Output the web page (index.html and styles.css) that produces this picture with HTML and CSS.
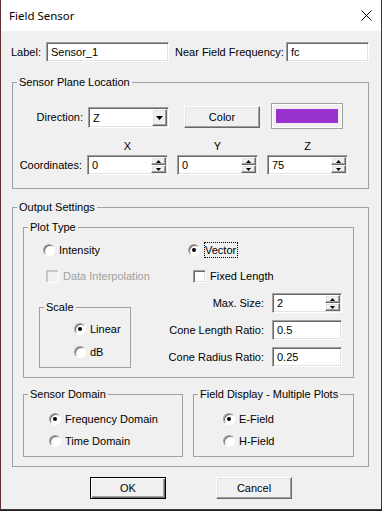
FILE: index.html
```html
<!DOCTYPE html>
<html lang="en">
<head>
  <meta charset="UTF-8">
  <meta name="viewport" content="width=device-width, initial-scale=1.0">
  <link rel="stylesheet" href="styles.css">
</head>
<body>
  <div class="window">
    <div class="titlebar">
      <span class="title">Field Sensor</span>
      <svg class="close" width="11" height="11" viewBox="0 0 11 11">
        <path d="M0.5 0.5 L10.5 10.5 M10.5 0.5 L0.5 10.5" stroke="#000" stroke-width="1" fill="none"/>
      </svg>
    </div>

    <div class="row-top">
      <span class="lbl lbl-label">Label:</span>
      <div class="field w-label"><span class="val">Sensor_1</span></div>
      <span class="lbl lbl-freq">Near Field Frequency:</span>
      <div class="field w-freq"><span class="val">fc</span></div>
    </div>

    <!-- Sensor Plane Location -->
    <div class="group g-plane">
      <div class="legend">Sensor Plane Location</div>
      <div class="dir-row">
        <span class="lbl dir-lbl">Direction:</span>
        <div class="field combo">
          <span class="val">Z</span>
          <span class="btn drop">
            <svg width="7" height="4" viewBox="0 0 7 4"><polygon points="0,0 7,0 3.5,4" fill="#000"/></svg>
          </span>
        </div>
        <div class="btn color-btn">Color</div>
        <div class="swatch"><div class="swatch-fill"></div></div>
      </div>
      <div class="coord-grid">
        <span></span>
        <span class="axis">X</span>
        <span class="axis">Y</span>
        <span class="axis">Z</span>
        <span class="lbl coord-lbl">Coordinates:</span>
        <div class="field spin">
          <span class="val">0</span>
          <span class="arrows">
            <span class="btn arr"><svg width="5" height="3" viewBox="0 0 5 3"><polygon points="0,3 5,3 2.5,0" fill="#000"/></svg></span>
            <span class="btn arr"><svg width="5" height="3" viewBox="0 0 5 3"><polygon points="0,0 5,0 2.5,3" fill="#000"/></svg></span>
          </span>
        </div>
        <div class="field spin">
          <span class="val">0</span>
          <span class="arrows">
            <span class="btn arr"><svg width="5" height="3" viewBox="0 0 5 3"><polygon points="0,3 5,3 2.5,0" fill="#000"/></svg></span>
            <span class="btn arr"><svg width="5" height="3" viewBox="0 0 5 3"><polygon points="0,0 5,0 2.5,3" fill="#000"/></svg></span>
          </span>
        </div>
        <div class="field spin">
          <span class="val">75</span>
          <span class="arrows">
            <span class="btn arr"><svg width="5" height="3" viewBox="0 0 5 3"><polygon points="0,3 5,3 2.5,0" fill="#000"/></svg></span>
            <span class="btn arr"><svg width="5" height="3" viewBox="0 0 5 3"><polygon points="0,0 5,0 2.5,3" fill="#000"/></svg></span>
          </span>
        </div>
      </div>
    </div>

    <!-- Output Settings -->
    <div class="group g-output">
      <div class="legend">Output Settings</div>

      <div class="group g-plot">
        <div class="legend">Plot Type</div>
        <div class="opt-row">
          <label class="opt opt-intensity"><span class="radio"></span>Intensity</label>
          <label class="opt"><span class="radio on"></span><span class="focus">Vector</span></label>
        </div>
        <div class="opt-row chk-row">
          <label class="opt opt-interp disabled"><span class="check"></span>Data Interpolation</label>
          <label class="opt"><span class="check"></span>Fixed Length</label>
        </div>
        <div class="lower">
          <div class="group g-scale">
            <div class="legend">Scale</div>
            <label class="opt scale-opt first"><span class="radio on"></span>Linear</label>
            <label class="opt scale-opt"><span class="radio"></span>dB</label>
          </div>
          <div class="params">
            <span class="lbl">Max. Size:</span>
            <div class="field spin">
              <span class="val">2</span>
              <span class="arrows">
                <span class="btn arr"><svg width="5" height="3" viewBox="0 0 5 3"><polygon points="0,3 5,3 2.5,0" fill="#000"/></svg></span>
                <span class="btn arr"><svg width="5" height="3" viewBox="0 0 5 3"><polygon points="0,0 5,0 2.5,3" fill="#000"/></svg></span>
              </span>
            </div>
            <span class="lbl">Cone Length Ratio:</span>
            <div class="field"><span class="val">0.5</span></div>
            <span class="lbl">Cone Radius Ratio:</span>
            <div class="field"><span class="val">0.25</span></div>
          </div>
        </div>
      </div>

      <div class="domain-row">
        <div class="group g-domain">
          <div class="legend">Sensor Domain</div>
          <label class="opt dom-opt first"><span class="radio on"></span>Frequency Domain</label>
          <label class="opt dom-opt"><span class="radio"></span>Time Domain</label>
        </div>
        <div class="group g-display">
          <div class="legend">Field Display - Multiple Plots</div>
          <label class="opt disp-opt first"><span class="radio on"></span>E-Field</label>
          <label class="opt disp-opt"><span class="radio"></span>H-Field</label>
        </div>
      </div>
    </div>

    <div class="buttons">
      <div class="btn push default">OK</div>
      <div class="btn push cancel">Cancel</div>
    </div>
  </div>
</body>
</html>
```

FILE: styles.css
```css
* {
  box-sizing: border-box;
}

html,
body {
  margin: 0;
}

body {
  background: #1f1f1f;
  font-family: "Liberation Sans", Arial, sans-serif;
  font-size: 11px;
  color: #000;
  overflow: hidden;
}

.window {
  width: 382px;
  height: 510px;
  background: #f0f0f0;
  border-left: 1px solid #5e2f2f;
  border-right: 1px solid #3a3a3a;
  border-bottom: 1px solid #3a3a3a;
  display: flex;
  flex-direction: column;
}

/* Title bar */
.titlebar {
  height: 31px;
  background: #fff;
  display: flex;
  align-items: center;
  padding: 0 9px 0 8px;
}

.title {
  font-family: "Noto Sans", "Liberation Sans", sans-serif;
  font-size: 11.5px;
}

.close {
  margin-left: auto;
}

/* Generic controls */
.lbl {
  white-space: nowrap;
}

.field {
  background: #fff;
  height: 20px;
  border: 1px solid;
  border-color: #a0a0a0 #fff #fff #a0a0a0;
  box-shadow: inset 1px 1px #696969, inset -1px -1px #e3e3e3;
  display: flex;
  align-items: center;
}

.val {
  flex: 1;
  padding-left: 4px;
}

.btn {
  background: #f0f0f0;
  border: 1px solid;
  border-color: #fff #696969 #696969 #fff;
  box-shadow: inset -1px -1px #a0a0a0, inset 1px 1px #e3e3e3;
  display: flex;
  align-items: center;
  justify-content: center;
}

.arrows {
  display: flex;
  flex-direction: column;
  align-self: stretch;
  margin: 1px;
}

.arr {
  width: 15px;
  flex: 1;
}

/* Top row */
.row-top {
  display: flex;
  align-items: center;
  margin-top: 11px;
  padding-left: 10px;
  height: 20px;
}

.lbl-label {
  width: 35px;
}

.w-label {
  width: 123px;
}

.lbl-freq {
  margin-left: 6px;
  width: 111px;
}

.w-freq {
  width: 83px;
}

/* Group boxes */
.group {
  border: 1px solid #a0a0a0;
}

.legend {
  display: table;
  margin: -7px 0 -6px 4px;
  padding: 0 2px;
  line-height: 13px;
  background: #f0f0f0;
}

.g-plane {
  margin: 20px 0 0 11px;
  width: 357px;
  padding-bottom: 13px;
}

.dir-row {
  display: flex;
  align-items: flex-start;
  margin-top: 20px;
  height: 26px;
}

.dir-lbl {
  width: 75px;
  text-align: right;
  padding-right: 5px;
  margin-top: 4px;
  line-height: 21px;
}

.combo {
  width: 81px;
  height: 21px;
  margin-top: 4px;
}

.drop {
  width: 15px;
  align-self: stretch;
  margin: 1px;
}

.color-btn {
  width: 76px;
  height: 22px;
  margin: 3px 0 0 15px;
}

.swatch {
  width: 72px;
  height: 26px;
  margin-left: 11px;
  border: 1px solid;
  border-color: #a0a0a0 #a0a0a0 #a0a0a0 #a0a0a0;
  box-shadow: inset 1px 1px #fff, inset -1px -1px #fff;
  padding: 5px 4px 5px 4px;
}

.swatch-fill {
  height: 100%;
  background: #9932cc;
}

.coord-grid {
  display: grid;
  grid-template-columns: 74px 90px 90px 81px;
  grid-template-rows: 13px 20px;
  row-gap: 2px;
  margin-top: 11px;
}

.axis {
  width: 81px;
  text-align: center;
  line-height: 13px;
}

.coord-lbl {
  text-align: right;
  padding-right: 5px;
  line-height: 20px;
}

.spin {
  width: 81px;
}

/* Output settings */
.g-output {
  margin: 18px 0 0 11px;
  width: 357px;
  padding-bottom: 9px;
}

.g-plot {
  margin: 19px 14px 0 10px;
  padding-bottom: 9px;
}

.opt-row {
  display: flex;
  align-items: center;
  height: 16px;
  margin-top: 14px;
}

.chk-row {
  margin-top: 10px;
}

.opt {
  display: flex;
  align-items: center;
  gap: 4px;
  height: 16px;
  white-space: nowrap;
}

.opt-intensity {
  margin-left: 19px;
  width: 145px;
}

.opt-interp {
  margin-left: 22px;
  width: 147px;
}

.disabled {
  color: #a0a0a0;
}

.radio {
  width: 12px;
  height: 12px;
  border-radius: 50%;
  background: #fff;
  border: 1px solid;
  border-color: #a0a0a0 #fff #fff #a0a0a0;
  box-shadow: inset 1px 1px #696969;
  display: flex;
  align-items: center;
  justify-content: center;
  flex: none;
}

.radio.on::after {
  content: "";
  width: 4px;
  height: 4px;
  border-radius: 50%;
  background: #000;
}

.check {
  width: 13px;
  height: 13px;
  background: #fff;
  border: 1px solid;
  border-color: #a0a0a0 #fff #fff #a0a0a0;
  box-shadow: inset 1px 1px #696969, inset -1px -1px #e3e3e3;
  flex: none;
}

.disabled .check {
  background: #f0f0f0;
  border-color: #c8c8c8 #fff #fff #c8c8c8;
  box-shadow: inset 1px 1px #c8c8c8;
}

.focus {
  border: 1px dotted #000;
  line-height: 14px;
  padding: 0 1px 0 0;
}

.lower {
  display: flex;
  align-items: flex-start;
  margin-top: 9px;
}

.g-scale {
  margin: 14px 0 0 15px;
  width: 92px;
  height: 61px;
}

.scale-opt {
  margin: 7px 0 0 34px;
}

.scale-opt.first {
  margin-top: 13px;
}

.params {
  margin-left: auto;
  margin-right: 11px;
  display: grid;
  grid-template-columns: auto 70px;
  grid-auto-rows: 20px;
  column-gap: 8px;
  row-gap: 7px;
  align-items: center;
}

.params .lbl {
  text-align: right;
}

.params .spin {
  width: 70px;
}

.domain-row {
  display: flex;
  margin: 16px 0 0 10px;
}

.g-domain {
  width: 160px;
  height: 63px;
}

.g-display {
  width: 161px;
  height: 63px;
  margin-left: 10px;
}

.dom-opt {
  margin: 6px 0 0 25px;
}

.disp-opt {
  margin: 6px 0 0 29px;
}

.dom-opt.first,
.disp-opt.first {
  margin-top: 16px;
}

/* Bottom buttons */
.buttons {
  display: flex;
  margin-top: 10px;
}

.push {
  width: 76px;
  height: 22px;
}

.default {
  margin-left: 89px;
  border: 1px solid #000;
  box-shadow: inset 1px 1px #fff, inset -1px -1px #696969, inset -2px -2px #a0a0a0;
}

.cancel {
  margin-left: 50px;
}
```
